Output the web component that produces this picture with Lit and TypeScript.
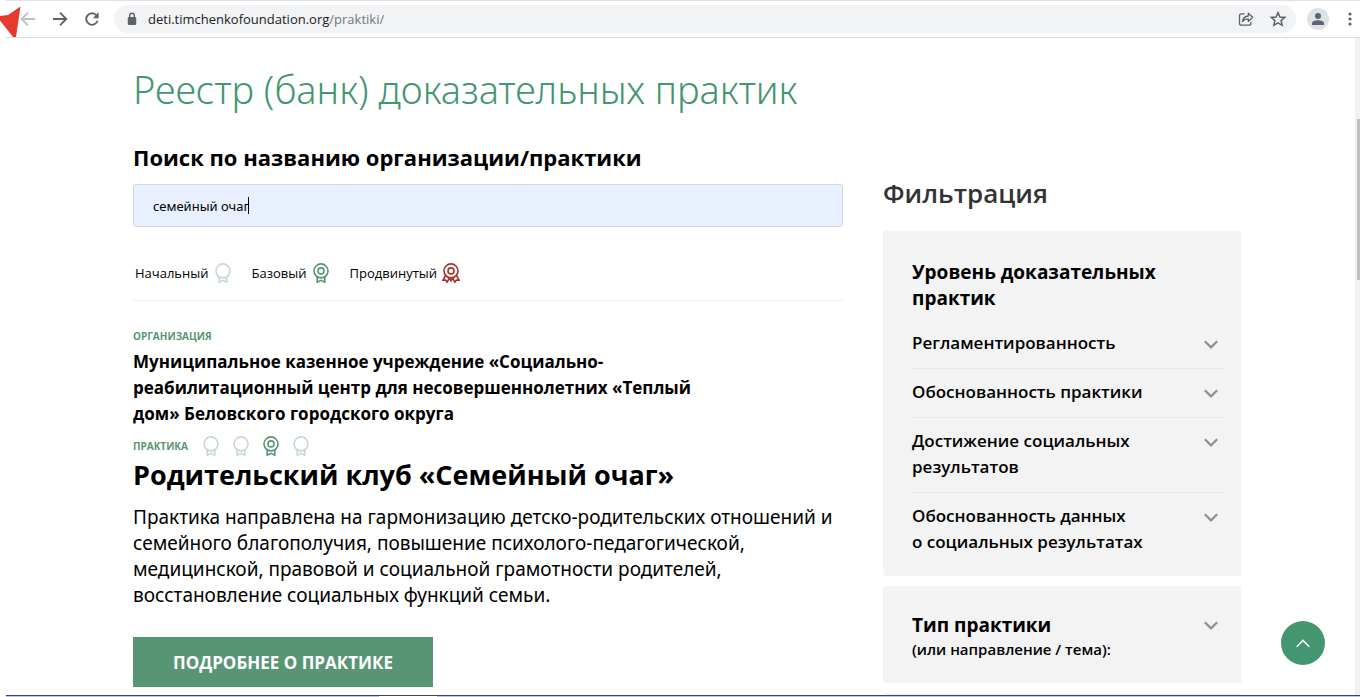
import { LitElement, html, css, svg } from "lit";
import { customElement, property } from "lit/decorators.js";

type Level = "initial" | "basic" | "advanced";

@customElement("level-badge")
class LevelBadge extends LitElement {
  @property() level: Level = "initial";

  static styles = css`
    :host { display: inline-flex; flex: none; }
    svg { display: block; width: 18px; height: 20px; fill: none; stroke-width: 1.6; }
    .initial { stroke: #c6dacf; }
    .basic { stroke: #589574; }
    .advanced { stroke: #a5302f; }
  `;

  render() {
    const tails = this.level === "advanced"
      ? svg`<path d="M3.6 12.4 1 17.2l2.6-.2 1.5 2.2 2.6-4.8M14.4 12.4l2.6 4.8-2.6-.2-1.5 2.2-2.6-4.8M7.2 15.2 9 17.8l1.8-2.6"/>`
      : svg`<path d="M5.200 14v5.200L9 17.400l3.800 1.800V14"/>`;
    return html`<svg class=${this.level} viewBox="0 0 18 20" aria-hidden="true">
      <circle cx="9" cy="7.9" r="7"/>
      ${this.level === "initial" ? "" : svg`<circle cx="9" cy="7.9" r="3"/>`}
      ${tails}
    </svg>`;
  }
}

@customElement("browser-bar")
class BrowserBar extends LitElement {
  static styles = css`
    :host {
      display: flex; align-items: center; flex: none; height: 38px; gap: 11px;
      padding: 0 0 0 12px; border-top: 1px solid #dee1e6; border-bottom: 1px solid #d8dadd;
      background: #fff; font: 13px/20px "Open Sans", "Noto Sans", sans-serif; color: #202124;
    }
    button { display: flex; padding: 0; border: 0; background: none; color: #5f6368; }
    svg { display: block; }
    .nav { display: flex; gap: 12px; }
    .off { color: #bdc1c6; }
    .address {
      display: flex; align-items: center; flex: 1; height: 28px; margin-left: 1px; padding: 0 8px 0 12px;
      border-radius: 14px; background: #f1f3f4;
    }
    .lock { margin-right: 10px; fill: #5f6368; }
    .url { flex: 1; white-space: nowrap; }
    .path { color: #73777c; }
    .actions { display: flex; gap: 12px; }
    .avatar { width: 22px; height: 22px; border-radius: 50%; background: #dee1e6; justify-content: center; align-items: center; }
    .menu { width: 20px; justify-content: center; overflow: hidden; }
  `;

  render() {
    return html`
      <div class="nav">
        <button class="off" aria-label="Назад"><svg width="20" height="20" viewBox="0 0 20 20" fill="none" stroke="currentColor" stroke-width="1.9"><path d="M17 10H4M10 3.7 3.7 10l6.3 6.3"/></svg></button>
        <button aria-label="Вперёд"><svg width="20" height="20" viewBox="0 0 20 20" fill="none" stroke="currentColor" stroke-width="1.9"><path d="M3 10h13M10 3.7l6.3 6.3-6.3 6.3"/></svg></button>
        <button aria-label="Обновить"><svg width="20" height="20" viewBox="0 0 24 24" fill="currentColor"><path d="M20 4v7h-7l3.1-3.1A5.8 5.8 0 1 0 17.5 14h2.200A8 8 0 1 1 17.600 6.400z"/></svg></button>
      </div>
      <div class="address">
        <svg class="lock" width="12" height="14" viewBox="0 0 12 14"><path d="M3 5h6q1.200 0 1.200 1.200v5.600q0 1.200-1.200 1.200H3q-1.200 0-1.200-1.200V6.200Q1.800 5 3 5z"/><path d="M3.700 6V3.500a2.300 2.300 0 0 1 4.600 0V6" fill="none" stroke="#5f6368" stroke-width="1.4"/></svg>
        <span class="url">deti.timchenkofoundation.org<span class="path">/praktiki/</span></span>
        <div class="actions">
          <button aria-label="Поделиться"><svg width="20" height="20" viewBox="0 0 20 20" fill="none" stroke="currentColor" stroke-width="1.3"><path d="M8.500 4.800H5.500q-2 0-2 2v7.400q0 2 2 2h7.400q2 0 2-2V13"/><path d="M6.500 12.500c.6-3.800 2.800-5.300 5.800-5.500V4.200L16.700 8.300l-4.400 4.100V9.900c-2.500 0-4.300.8-5.800 2.600z" stroke-linejoin="round"/></svg></button>
          <button aria-label="В закладки"><svg width="20" height="20" viewBox="0 0 20 20" fill="none" stroke="currentColor" stroke-width="1.5"><path d="m10 3.600 1.900 4.400 4.800.4-3.600 3.200 1.100 4.700L10 13.800l-4.200 2.500 1.100-4.700-3.600-3.200 4.800-.4z"/></svg></button>
        </div>
      </div>
      <button class="avatar" aria-label="Профиль"><svg width="14" height="14" viewBox="0 0 14 14" fill="#5a6377"><circle cx="7" cy="4" r="3"/><path d="M1 13v-1.500C1 9.500 4 8.300 7 8.300s6 1.200 6 3.200V13z"/></svg></button>
      <button class="menu" aria-label="Меню"><svg width="4" height="16" viewBox="0 0 4 16" fill="currentColor"><circle cx="2" cy="3" r="1.6"/><circle cx="2" cy="8" r="1.6"/><circle cx="2" cy="13" r="1.6"/></svg></button>
    `;
  }
}

@customElement("app-root")
class AppRoot extends LitElement {
  static styles = css`
    * { box-sizing: border-box; }
    :host {
      display: flex; flex-direction: column; position: relative; height: 100vh; overflow: hidden;
      padding-left: 6px; box-sizing: border-box; background: #fff; color: #000;
      font-family: "Open Sans", "Noto Sans", sans-serif;
    }
    h1, h2, h3, p { margin: 0; }
    button { font: inherit; color: inherit; border: 0; background: none; padding: 0; text-align: left; }
    .pointer { position: absolute; left: 0; top: 6px; }
    .page { display: flex; flex: 1; min-height: 0; }
    .content {
      flex: 1; min-width: 0; overflow: hidden; padding: 23px 114px 0 127px;
    }
    .scroll { width: 5px; flex: none; padding: 81px 0 0 2px; background: #f1f1f1; }
    .thumb { height: 161px; background: #c1c1c1; }
    h1 { font: 300 38px/56px "Noto Sans", sans-serif; color: #439670; }
    .columns { display: grid; grid-template-columns: minmax(0, 1fr) 358px; gap: 40px; margin-top: 24px; }
    .search-label { display: block; font-size: 22px; line-height: 32px; font-weight: 700; }
    .search {
      display: block; width: 100%; height: 43px; margin-top: 11px; padding: 0 19px; border: 1px solid #d3d7de;
      border-radius: 3px; background: #e8f0fe; color: #000; font: 13px/20px "Noto Sans", sans-serif; outline: none;
    }
    .field { position: relative; }
    .caret { position: absolute; left: 115px; top: 13px; width: 1px; height: 17px; background: #000; }
    .legend {
      display: flex; gap: 20px; height: 74px; padding: 34px 2px 0; border-bottom: 1px solid #f1f1f1;
      font-size: 13px; line-height: 24px;
    }
    .legend span { display: flex; gap: 5px; align-items: center; height: 24px; }
    .practice { padding-top: 27px; }
    .tag { font-size: 10px; line-height: 16px; font-weight: 700; color: #589574; text-transform: uppercase; }
    .org { margin-top: 5px; max-width: 600px; font-size: 17px; line-height: 26px; font-weight: 700; }
    .rate { display: flex; align-items: center; gap: 12px; height: 20px; margin-top: 9px; }
    .rate .tag { margin-right: 2px; }
    .name { font-size: 27px; line-height: 38px; font-weight: 700; }
    .about { margin-top: 10px; font: 400 19px/26px "Noto Sans", sans-serif; }
    .more {
      display: inline-flex; align-items: center; height: 50px; margin-top: 29px; padding: 0 40px;
      background: #589574; color: #fff; font-size: 17px; font-weight: 700; text-decoration: none; text-transform: uppercase;
    }
    .filters { padding-top: 32px; }
    .filters h2 { font-size: 26px; line-height: 40px; font-weight: 600; color: #333; margin-bottom: 18px; }
    .card { margin-bottom: 10px; padding: 28px 17px 9px 29px; border-radius: 3px 0 0 3px; background: #f3f3f3; }
    .card h3 { font-size: 19px; line-height: 26px; font-weight: 700; }
    .levels { margin-top: 9px; }
    .filter {
      display: flex; justify-content: space-between; align-items: flex-start; width: 100%;
      padding: 10px 6px 12px 0; border-bottom: 1px solid #e8e8e8; font-size: 17px; line-height: 26px; font-weight: 600;
    }
    .filter:last-child { border-bottom: 0; }
    .filter svg { margin-top: 10px; }
    .type { display: flex; justify-content: space-between; align-items: flex-start; width: 100%; padding: 0 6px 0 0; }
    .type svg { margin-top: 9px; }
    .type small { display: block; font-size: 15px; line-height: 22px; font-weight: 600; }
    .type-card { padding-bottom: 23px; padding-top: 26px; }
    .up {
      position: absolute; right: 35px; bottom: 32px; width: 44px; height: 44px; border-radius: 50%;
      display: flex; align-items: center; justify-content: center; background: #439670;
    }
    .edge { flex: none; height: 2px; border-top: 1px solid #3c4655; background: #b9cbe2; padding-left: 373px; }
    .tab { width: 58px; height: 1px; background: #fff; }
  `;

  private chevron() {
    return html`<svg width="14" height="10" viewBox="0 0 14 10" fill="none" stroke="#909090" stroke-width="2.2" aria-hidden="true"><path d="m.8 1.200 6.200 6.200 6.200-6.200"/></svg>`;
  }

  private filters = [
    html`Регламентированность`,
    html`Обоснованность практики`,
    html`Достижение социальных<br>результатов`,
    html`Обоснованность данных<br>о социальных результатах`,
  ];

  render() {
    return html`
      <browser-bar></browser-bar>
      <svg class="pointer" width="22" height="32" viewBox="0 0 22 32" aria-hidden="true"><path d="M20.500.500 16 31h-3L0 14.500V10l8-1z" fill="#e8392d"/></svg>
      <div class="page">
        <div class="content">
          <h1>Реестр (банк) доказательных практик</h1>
          <div class="columns">
            <main>
              <label class="search-label" for="search">Поиск по названию организации/практики</label>
              <div class="field">
                <input class="search" id="search" type="text" value="семейный очаг">
                <span class="caret"></span>
              </div>
              <div class="legend">
                <span>Начальный <level-badge level="initial"></level-badge></span>
                <span>Базовый <level-badge level="basic"></level-badge></span>
                <span>Продвинутый <level-badge level="advanced"></level-badge></span>
              </div>
              <article class="practice">
                <p class="tag">Организация</p>
                <p class="org">Муниципальное казенное учреждение «Социально-реабилитационный центр для несовершеннолетних «Теплый дом» Беловского городского округа</p>
                <div class="rate">
                  <span class="tag">Практика</span>
                  ${(["initial", "initial", "basic", "initial"] as Level[]).map((l) => html`<level-badge level=${l}></level-badge>`)}
                </div>
                <h2 class="name">Родительский клуб «Семейный очаг»</h2>
                <p class="about">Практика направлена на гармонизацию детско-родительских отношений и семейного благополучия, повышение психолого-педагогической, медицинской, правовой и социальной грамотности родителей, восстановление социальных функций семьи.</p>
                <a class="more" href="#practice">Подробнее о практике</a>
              </article>
            </main>
            <aside class="filters">
              <h2>Фильтрация</h2>
              <section class="card">
                <h3>Уровень доказательных практик</h3>
                <div class="levels">
                  ${this.filters.map((f) => html`<button class="filter"><span>${f}</span>${this.chevron()}</button>`)}
                </div>
              </section>
              <section class="card type-card">
                <button class="type"><span><h3>Тип практики</h3><small>(или направление / тема):</small></span>${this.chevron()}</button>
              </section>
              <section class="card"></section>
            </aside>
          </div>
        </div>
        <div class="scroll"><div class="thumb"></div></div>
      </div>
      <div class="edge"><div class="tab"></div></div>
      <button class="up" aria-label="Наверх"><svg width="14" height="9" viewBox="0 0 14 9" fill="none" stroke="#fff" stroke-width="1.5"><path d="m.7 7.700 6.300-6.300 6.300 6.300"/></svg></button>
    `;
  }
}
